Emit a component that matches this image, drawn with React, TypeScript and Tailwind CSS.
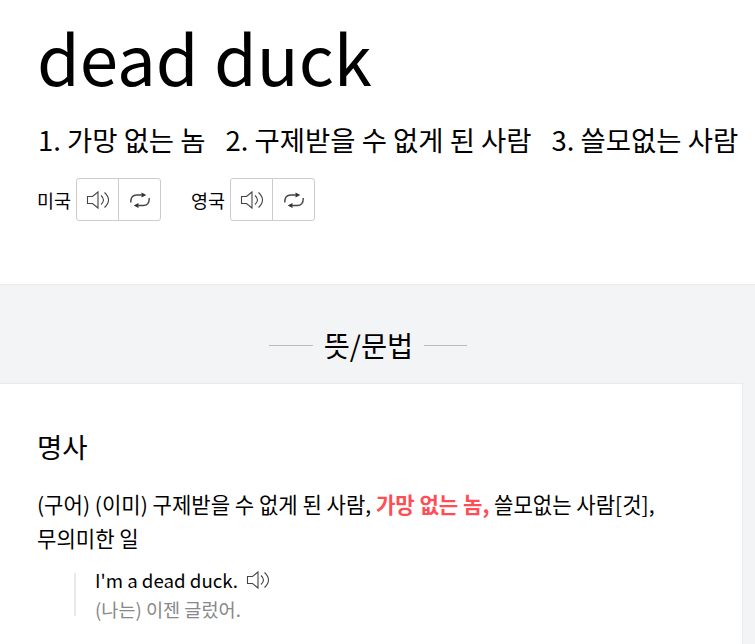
const sans = "font-['Noto_Sans_CJK_KR','Noto_Sans',sans-serif]";

function SpeakerIcon({ className = '' }: { className?: string }) {
  return (
    <svg className={className} width="24" height="20" viewBox="0 0 24 20" fill="none" stroke="#444" strokeWidth="1.1" aria-hidden="true">
      <path d="M1.5 6.500h5l5.500-4.500v16l-5.500-4.500h-5z" />
      <path d="M15 5.500q5 4.500 0 9M18.500 2.500q8 7.500 0 15" />
    </svg>
  );
}

function RepeatIcon() {
  return (
    <svg width="22" height="18" viewBox="0 0 22 18" fill="none" stroke="#444" strokeWidth="1.4" aria-hidden="true">
      <path d="M1.700 11.500c0-5 2-7.500 6-7.500h5M20.300 7c0 5-2 7.500-6 7.500h-5" />
      <path d="M12.500 1.500l4.800 2.500-4.800 2.500zM9.500 12l-4.800 2.500 4.800 2.500z" fill="#333" stroke="none" />
    </svg>
  );
}

function Pronunciation({ label }: { label: string }) {
  return (
    <div className="flex items-center gap-1">
      <span className="-ml-px w-[35px] pt-[2px] text-[18.500px] whitespace-nowrap">{label}</span>
      <div className="flex h-[43px] w-[85px] rounded-[3px] border border-[#ccc]">
        <button className="flex flex-1 items-center justify-center border-r border-[#ccc]">
          <SpeakerIcon />
        </button>
        <button className="flex flex-1 items-center justify-center">
          <RepeatIcon />
        </button>
      </div>
    </div>
  );
}

export default function App() {
  return (
    <div className={`h-[644px] w-[755px] overflow-hidden bg-white text-black ${sans}`}>
      <header className="h-[284px] pt-[8px] pl-[38px]">
        <h1 className="-ml-px text-[69px] leading-[96px]">dead duck</h1>
        <p className="mt-[15px] flex gap-[20px] text-[27.450px] leading-[40px] whitespace-nowrap">
          <span>1. 가망 없는 놈</span>
          <span>2. 구제받을 수 없게 된 사람</span>
          <span>3. 쓸모없는 사람</span>
        </p>
        <div className="mt-[19px] flex gap-[31px]">
          <Pronunciation label="미국" />
          <Pronunciation label="영국" />
        </div>
      </header>
      <section className="h-[360px] border-t border-[#e8eaec] bg-[#f3f4f6]">
        <div className="flex h-[98px] w-[736px] items-center justify-center gap-[11px] pt-[22px]">
          <span className="h-px w-11 bg-[#bbb]" />
          <h2 className="text-[28.400px] leading-[40px]">뜻/문법</h2>
          <span className="h-px w-[43px] bg-[#bbb]" />
        </div>
        <div className="h-[261px] w-[743px] border-t border-r border-[#e8eaec] bg-white pt-[42px] pl-[37px]">
          <h3 className="text-[27.500px] leading-[40px]">명사</h3>
          <p className="mt-[21px] text-[21.080px] leading-[34px] whitespace-nowrap">
            (구어) (이미) 구제받을 수 없게 된 사람, <strong className="text-[#ff4d55]">가망 없는 놈,</strong> 쓸모없는 사람[것],
            <br />
            무의미한 일
          </p>
          <div className="mt-[18px] ml-[37px] h-[43px] border-l-2 border-[#eaeaea] pl-[19px]">
            <p className="flex h-[14px] items-center text-[18.700px]">
              I'm a dead duck. <SpeakerIcon className="ml-2" />
            </p>
            <p className="mt-[8px] text-[18.600px] leading-[28px] text-[#888]">(나는) 이젠 글렀어.</p>
          </div>
        </div>
      </section>
    </div>
  );
}
